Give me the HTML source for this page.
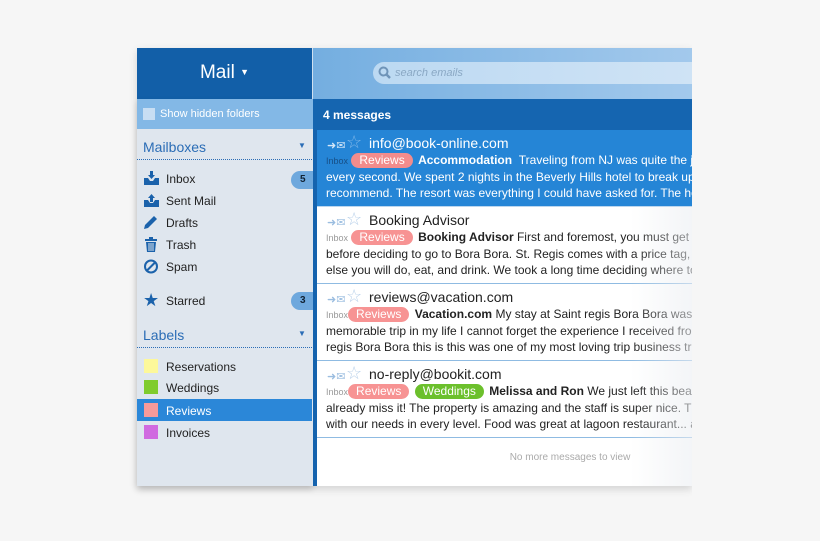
<!DOCTYPE html><html><head><style>
body{margin:0;width:820px;height:541px;background:#f6f6f6;font-family:"Liberation Sans",sans-serif;position:relative;overflow:hidden}
.a{position:absolute}
.side{left:137px;top:99px;width:176px;height:387px;background:#dfe6ee;box-shadow:0 3px 6px rgba(0,0,0,.15)}
.it{position:absolute;left:166px;font-size:12px;color:#222}
.ic{position:absolute;left:143px;width:17px;height:15px}
.sw{position:absolute;left:144px;width:14px;height:14px}
.badge{position:absolute;left:291px;width:26px;height:18px;border-radius:9px 0 0 9px;background:#6ea8dd;font-size:10px;font-weight:bold;color:#123;line-height:18px;text-indent:9px}
.msg{position:absolute;left:317px;width:375px;height:76px;border-bottom:1px solid #8fbbe2;font-size:12px;line-height:16px;color:#222;overflow:hidden;white-space:nowrap}
.msg .f{position:absolute;left:52px;top:5px;font-size:14px}
.msg .ico{position:absolute;left:10px;top:8px;font-size:11px;color:#9bbde0}
.msg .st{position:absolute;left:29px;top:4px;font-size:18px;color:#b8d0ea}
.msg .b{position:absolute;left:9px;top:22px}
.tag{display:inline-block;border-radius:8px;padding:0 8px;color:#fff;font-size:12px;line-height:15px;margin-right:2px}
.ib{font-size:9px;color:#999}
</style></head><body>
<div class="a" style="left:137px;top:48px;width:555px;height:438px;box-shadow:0 3px 8px rgba(0,0,0,.15)"></div>
<div class="a" style="left:137px;top:48px;width:175px;height:51px;background:#125fa8;color:#fff;font-size:19px;text-align:center;line-height:48px">Mail <span style="font-size:9px;vertical-align:3px">▼</span></div>
<div class="a" style="left:312px;top:48px;width:380px;height:51px;background:linear-gradient(90deg,#74aee0,#a3c9ec);border-left:1px solid #cfe0f0"></div>
<div class="a" style="left:373px;top:62px;width:319px;height:22px;border-radius:11px 0 0 11px;background:linear-gradient(90deg,#bcd9f2,#cfe3f5);font-size:11px;font-style:italic;color:#8aa8c4;line-height:22px;text-indent:22px">search emails</div>
<svg class="a" style="left:378px;top:66px" width="14" height="14"><circle cx="5.5" cy="5.5" r="4" stroke="#6f94b8" stroke-width="2" fill="none"/><path d="M8.5 8.5L12 12" stroke="#6f94b8" stroke-width="2.5"/></svg>
<div class="a side"></div>
<div class="a" style="left:137px;top:99px;width:176px;height:30px;background:#83b8e6"></div>
<div class="a" style="left:143px;top:108px;width:12px;height:12px;background:#c8def3"></div>
<div class="a" style="left:160px;top:108px;font-size:11px;color:#fff">Show hidden folders</div>
<div class="a" style="left:143px;top:139px;font-size:14px;color:#2b6db6">Mailboxes</div>
<div class="a" style="left:298px;top:141px;font-size:8px;color:#2b6db6">▼</div>
<div class="a" style="left:137px;top:159px;width:175px;border-top:1px dotted #2b6db6"></div>
<svg class="ic" style="top:171px" viewBox="0 0 17 15"><path d="M1 7h4l2 3h3l2-3h4v7H1z M7 0h3v4h2l-3.5 4L5 4h2z" fill="#1b62ab"/></svg>
<div class="it" style="top:172px">Inbox</div>
<svg class="ic" style="top:193px" viewBox="0 0 17 15"><path d="M1 7h4l2 3h3l2-3h4v7H1z M7 9h3V5h2L8.5 1 5 5h2z" fill="#1b62ab"/></svg>
<div class="it" style="top:194px">Sent Mail</div>
<svg class="ic" style="top:215px" viewBox="0 0 17 15"><path d="M1 14l1-4 9-9 3 3-9 9z" fill="#1b62ab"/></svg>
<div class="it" style="top:216px">Drafts</div>
<svg class="ic" style="top:237px" viewBox="0 0 17 15"><path d="M2 2h12v2H2z M6 0h4v2H6z M3 5h10l-1 10H4z" fill="#1b62ab"/><path d="M6 6v8M8 6v8M10 6v8" stroke="#dfe6ee"/></svg>
<div class="it" style="top:238px">Trash</div>
<svg class="ic" style="top:259px" viewBox="0 0 17 15"><circle cx="8" cy="7.5" r="6" stroke="#1b62ab" stroke-width="2" fill="none"/><path d="M4 11.5L12 3.5" stroke="#1b62ab" stroke-width="2"/></svg>
<div class="it" style="top:260px">Spam</div>
<div class="a" style="left:143px;top:290px;font-size:18px;color:#1b62ab">★</div>
<div class="it" style="top:294px">Starred</div>
<div class="badge" style="top:171px">5</div>
<div class="badge" style="top:292px">3</div>
<div class="a" style="left:143px;top:327px;font-size:14px;color:#2b6db6">Labels</div>
<div class="a" style="left:298px;top:329px;font-size:8px;color:#2b6db6">▼</div>
<div class="a" style="left:137px;top:347px;width:175px;border-top:1px dotted #2b6db6"></div>
<div class="sw" style="top:359px;background:#fdf89a"></div><div class="it" style="top:360px">Reservations</div>
<div class="sw" style="top:380px;background:#7fcc2e"></div><div class="it" style="top:381px">Weddings</div>
<div class="a" style="left:137px;top:399px;width:175px;height:22px;background:#2b87d8"></div>
<div class="sw" style="top:403px;background:#f79a9a"></div><div class="it" style="top:404px;color:#fff">Reviews</div>
<div class="sw" style="top:425px;background:#d06ae0"></div><div class="it" style="top:426px">Invoices</div>
<div class="a" style="left:313px;top:99px;width:379px;height:387px;background:#fff"></div>
<div class="a" style="left:313px;top:99px;width:4px;height:387px;background:#1563ae"></div>
<div class="a" style="left:313px;top:99px;width:379px;height:31px;background:#1565b0;color:#fff;font-size:12px;font-weight:bold;line-height:32px;text-indent:10px">4 messages</div>
<div class="msg" style="top:130px;background:#2585d6;color:#fff;border-bottom-color:#bcd6ee"><span class="ico" style="color:#d5e6f7">➜✉</span><span class="st" style="color:#7fb6e8">☆</span><span class="f">info@book-online.com</span>
<div class="b"><span class="ib" style="color:#174f86">Inbox</span> <span class="tag" style="background:#f38c8c">Reviews</span> <b>Accommodation</b> &nbsp;Traveling from NJ was quite the journey<br>every second. We spent 2 nights in the Beverly Hills hotel to break up<br>recommend. The resort was everything I could have asked for. The hotel</div></div>
<div class="msg" style="top:207px"><span class="ico">➜✉</span><span class="st">☆</span><span class="f">Booking Advisor</span>
<div class="b"><span class="ib">Inbox</span> <span class="tag" style="background:#f79393">Reviews</span> <b>Booking Advisor</b> First and foremost, you must get<br>before deciding to go to Bora Bora. St. Regis comes with a price tag,<br>else you will do, eat, and drink. We took a long time deciding where to</div></div>
<div class="msg" style="top:284px"><span class="ico">➜✉</span><span class="st">☆</span><span class="f">reviews@vacation.com</span>
<div class="b"><span class="ib">Inbox</span><span class="tag" style="background:#f79393">Reviews</span> <b>Vacation.com</b> My stay at Saint regis Bora Bora was<br>memorable trip in my life I cannot forget the experience I received from<br>regis Bora Bora this is this was one of my most loving trip business trip</div></div>
<div class="msg" style="top:361px"><span class="ico">➜✉</span><span class="st">☆</span><span class="f">no-reply@bookit.com</span>
<div class="b"><span class="ib">Inbox</span><span class="tag" style="background:#f79393">Reviews</span> <span class="tag" style="background:#6cc02c">Weddings</span> <b>Melissa and Ron</b> We just left this beautiful<br>already miss it! The property is amazing and the staff is super nice. The<br>with our needs in every level. Food was great at lagoon restaurant... and</div></div>
<div class="a" style="left:317px;top:452px;width:506px;text-align:center;font-size:10px;color:#aaa">No more messages to view</div>
<div class="a" style="left:630px;top:207px;width:62px;height:279px;background:linear-gradient(90deg,rgba(255,255,255,0),rgba(235,238,242,.6))"></div>
<div class="a" style="left:692px;top:40px;width:128px;height:460px;background:#f6f6f6"></div>
</body></html>
